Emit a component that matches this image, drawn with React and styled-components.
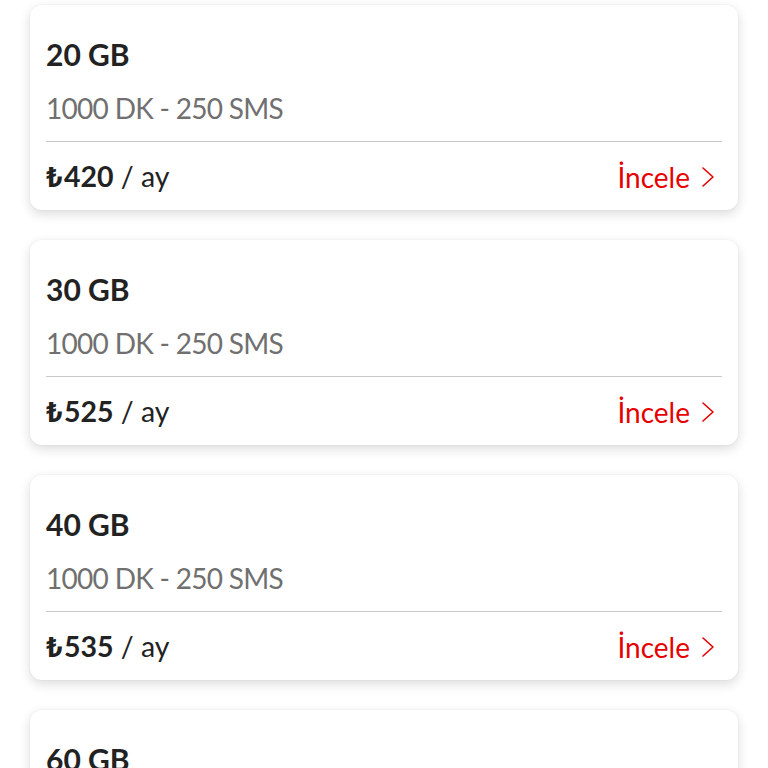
import React from "react";
import styled, { createGlobalStyle } from "styled-components";

// Global
const GlobalStyle = createGlobalStyle`
	html, body{
		margin: 0;
		padding: 0;
		background: #ffffff;
		font-family: Lato, "Open Sans", "DejaVu Sans", sans-serif;
	}
`;

// Data
const packages = [
	{ id: 1, data: "20 GB", detail: "1000 DK - 250 SMS", price: 420 },
	{ id: 2, data: "30 GB", detail: "1000 DK - 250 SMS", price: 525 },
	{ id: 3, data: "40 GB", detail: "1000 DK - 250 SMS", price: 535 },
	{ id: 4, data: "60 GB", detail: "1000 DK - 250 SMS", price: 600 },
];

// Chevron icon
const Chevron = () => (
	<svg width="16" height="24" viewBox="0 0 16 24" fill="none">
		<polyline points="3,3 13,12 3,21" stroke="#e60000" strokeWidth="1.6" strokeLinecap="round" strokeLinejoin="round" />
	</svg>
);

// Component
const PackageCard = ({ item }) => {
	return(
		<Card>
			<Title>{ item.data }</Title>
			<Detail>{ item.detail }</Detail>
			<Divider />
			<PriceRow>
				<Price>
					<strong><Lira>₺</Lira>{ item.price }</strong> / ay
				</Price>
				<Link href="#">
					İncele
					<Chevron />
				</Link>
			</PriceRow>
		</Card>
	);
};

const App = () => {
	return(
		<React.Fragment>
			<GlobalStyle />
			<List>
				{ packages.map((item) => <PackageCard key={ item.id } item={ item } />) }
			</List>
		</React.Fragment>
	);
};

// Styled
const List = styled.div`
	display: flex;
	flex-direction: column;
	gap: 30px;
	padding: 5px 30px 30px;
`;

const Card = styled.div`
	background: #ffffff;
	border-radius: 12px;
	box-shadow: 0 4px 12px rgba(0, 0, 0, 0.14), 0 0 3px rgba(0, 0, 0, 0.05);
	padding: 31px 16px 17px;
`;

const Title = styled.div`
	font-size: 30px;
	line-height: 36px;
	font-weight: 700;
	color: #222222;
`;

const Detail = styled.div`
	margin-top: 19px;
	font-size: 28px;
	line-height: 34px;
	letter-spacing: -0.7px;
	color: #707070;
`;

const Divider = styled.hr`
	margin: 16px 0 0;
	border: none;
	border-top: 1px solid #c8c8c8;
`;

const PriceRow = styled.div`
	margin-top: 19px;
	display: flex;
	justify-content: space-between;
	align-items: center;
	height: 32px;
`;

const Price = styled.div`
	font-size: 28.5px;
	line-height: 32px;
	color: #222222;
	strong{
		font-weight: 700;
	}
`;

const Lira = styled.span`
	font-family: Roboto, "DejaVu Sans", sans-serif;
	font-weight: 700;
	margin-right: 1px;
`;

const Link = styled.a`
	display: flex;
	align-items: center;
	gap: 10px;
	font-size: 28px;
	line-height: 32px;
	color: #e60000;
	text-decoration: none;
	padding-right: 6px;
`;

// Export
export default App;
